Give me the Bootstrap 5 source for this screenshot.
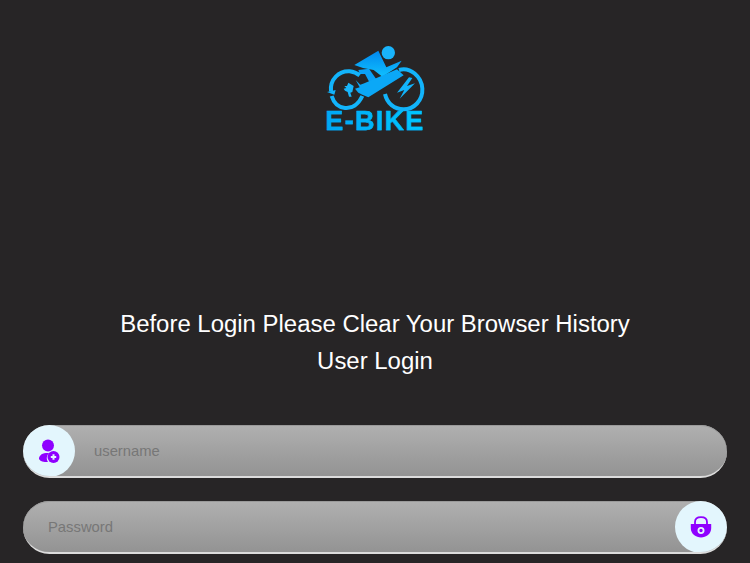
<!DOCTYPE html>
<html lang="en">
<head>
  <meta charset="UTF-8" />
  <meta name="viewport" content="width=device-width, initial-scale=1.0"/>
  <title>E-Bike Login</title>
  <link href="https://cdn.jsdelivr.net/npm/bootstrap@5.3.0/dist/css/bootstrap.min.css" rel="stylesheet"/>
  <style>
    html, body { height: 563px; overflow: hidden; }
    body { background: #272526; font-family: "Liberation Sans", Arial, sans-serif; }
    .login-wrap { padding: 44px 23px 0; }
    .logo-box { width: 100px; height: 90px; }
    .logo-word {
      font-family: "Liberation Sans", sans-serif;
      font-weight: 700; font-size: 27px; line-height: 20px; letter-spacing: 1.3px; white-space: nowrap;
      margin-top: -3px;
      -webkit-text-stroke: .4px #00b4fa;
      background: linear-gradient(90deg, #00a6f5, #00c8ff);
      -webkit-background-clip: text; background-clip: text; color: transparent;
    }
    .login-title { color: #fff; font-size: 23.95px; line-height: 37px; font-weight: 400; margin: 171px 0 46px; }
    .pill-field {
      height: 53px; border-radius: 27px; overflow: hidden;
      background: linear-gradient(180deg, #b0b0b0, #939393);
      border-bottom: 2px solid #dcdcdc;
      box-shadow: inset 0 1px 0 #9a9a9a;
    }
    .pill-field + .pill-field { margin-top: 23px; }
    .pill-field input {
      background: transparent; border: 0; outline: 0; box-shadow: none; height: 100%;
      font-size: 14.8px; color: #333; padding: 0;
    }
    .pill-field input::placeholder { color: #777; opacity: 1; }
    .user-input { margin-left: 19px; }
    .pass-input { margin-left: 25px; }
    .pill-icon { width: 52px; height: 52px; border-radius: 50%; background: #e3f6fd; flex: none; }
  </style>
</head>
<body>
  <div class="login-wrap">
    <div class="d-flex flex-column align-items-center">
      <div class="logo-box">
        <svg width="100" height="70" viewBox="46 40 300 210" xmlns="http://www.w3.org/2000/svg" class="d-block">
          <defs>
            <linearGradient id="bikeGrad" x1="0" y1="0" x2="0" y2="1">
              <stop offset="0" stop-color="#0088ee"/>
              <stop offset="1" stop-color="#10c0ff"/>
            </linearGradient>
          </defs>
          <circle cx="236" cy="66" r="20" fill="#19b4fb"/>
          <path d="M134 103 206 60 230 110 276 90 262 110 218 138 192 118 160 112Z" fill="url(#bikeGrad)"/>
          <path d="M146 118 178 114 200 146 180 156 166 130 150 130Z" fill="#0aa0f5"/>
          <path d="M64 182C60 146 88 120 120 122 130 123 140 126 150 134M158 196C146 222 126 234 106 232 86 230 72 216 66 196" fill="none" stroke="#12b4fb" stroke-width="12"/>
          <path d="M52 184 78 178 74 192Z" fill="#12b4fb"/>
          <path d="M138 148 152 162 164 158 262 116 282 134 176 200 158 192 146 186 136 174 150 170Z" fill="#0ba8f7"/>
          <path d="M116 156 132 166 128 184 122 186 126 198 118 198 114 184 106 180 102 174 110 172 104 166 112 166Z" fill="#18b6fb"/>
          <path d="M268 118C302 108 336 138 338 174 340 210 312 236 282 236 254 236 232 218 226 190" fill="none" stroke="#12b4fb" stroke-width="12"/>
          <path d="M298 140 262 186 284 178 270 204 316 158 292 166 308 142Z" fill="#12b4fb"/>
        </svg>
        <div class="logo-word text-center">E-BIKE</div>
      </div>
    </div>

    <div class="login-title text-center">
      <div>Before Login Please Clear Your Browser History</div>
      <div>User Login</div>
    </div>

    <form>
      <div class="pill-field d-flex align-items-center">
        <span class="pill-icon d-flex align-items-center justify-content-center">
          <svg width="22" height="24" viewBox="0 0 22 24" xmlns="http://www.w3.org/2000/svg">
            <circle cx="10" cy="6.500" r="6" fill="#8f00ff"/>
            <path d="M8 14C3 14 1 18 1 19.500 1 21.500 5 23.500 10 23 8 20 8.500 16 11.500 14Z" fill="#8f00ff"/>
            <circle cx="15.500" cy="18" r="6" fill="#8f00ff"/>
            <path d="M15.500 15.300V20.700M12.800 18H18.200" stroke="#e3f6fd" stroke-width="2"/>
          </svg>
        </span>
        <input type="text" class="user-input flex-grow-1" placeholder="username">
      </div>
      <div class="pill-field d-flex align-items-center">
        <input type="password" class="pass-input flex-grow-1" placeholder="Password">
        <span class="pill-icon d-flex align-items-center justify-content-center">
          <svg width="22" height="22" viewBox="0 0 22 22" xmlns="http://www.w3.org/2000/svg">
            <path d="M5 8V6C5 3 7.500 1.200 11 1.200S17 3 17 6V8" fill="none" stroke="#8f00ff" stroke-width="1.800"/>
            <path d="M.8 8H21.200V12C21.200 18 16 21.500 11 21.500S.8 18 .8 12Z" fill="#8f00ff"/>
            <circle cx="11" cy="14.500" r="2.600" fill="none" stroke="#e3f6fd" stroke-width="1.800"/>
          </svg>
        </span>
      </div>
    </form>
  </div>
  <script src="https://cdn.jsdelivr.net/npm/bootstrap@5.3.0/dist/js/bootstrap.bundle.min.js"></script>
</body>
</html>
